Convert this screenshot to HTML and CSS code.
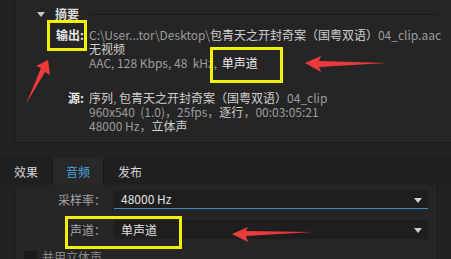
FILE: index.html
```html
<!DOCTYPE html>
<html lang="zh-CN">
<head>
  <meta charset="UTF-8">
  <title>导出设置 - 摘要</title>
  <link rel="stylesheet" href="styles.css">
</head>
<body>
  <section class="summary">
    <div class="summary-head">
      <span class="caret"></span>
      <span class="summary-title">摘要</span>
      <span class="rule"></span>
    </div>
    <dl class="info">
      <dt>输出:</dt>
      <dd>
        <div>C:\User...tor\Desktop\<span class="cjk">包青天之开封奇案（国粤双语）</span>04_clip.aac</div>
        <div class="cjk">无视频</div>
        <div>AAC, 128 Kbps, 48&nbsp; kHz, <span class="hi">单声道</span></div>
      </dd>
      <dt>源:</dt>
      <dd>
        <div><span class="cjk">序列</span>, <span class="cjk">包青天之开封奇案（国粤双语）</span>04_clip</div>
        <div>960x540&nbsp; (1.0)，25fps，<span class="cjk">逐行</span>，00:03:05:21</div>
        <div>48000 Hz，<span class="cjk">立体声</span></div>
      </dd>
    </dl>
  </section>

  <nav class="tabs">
    <button class="tab">效果</button>
    <button class="tab active">音频</button>
    <button class="tab">发布</button>
  </nav>

  <section class="panel">
    <div class="field">
      <label>采样率：</label>
      <div class="select focused">48000 Hz<span class="drop"></span></div>
    </div>
    <div class="field">
      <label>声道：</label>
      <div class="select">单声道<span class="drop"></span></div>
    </div>
    <div class="check"><span class="box"></span>并用立体声</div>
  </section>

  <!-- annotations drawn over the screenshot -->
  <div class="mark mark-output"></div>
  <div class="mark mark-mono"></div>
  <div class="mark mark-channel"></div>
  <svg class="arrows" width="451" height="259" viewBox="0 0 451 259">
    <polygon points="305,63 321,56 319,61 386,63 319,67 321,72" />
    <polygon points="48,60 50,75 45,72 26,104 41,68 36,66" />
    <polygon points="232,234 248,227 246,231 313,232 246,236 248,242" />
  </svg>
</body>
</html>
```

FILE: styles.css
```css
* { box-sizing: border-box; margin: 0; padding: 0; }
html, body {
  width: 451px;
  height: 259px;
  overflow: hidden;
}
body {
  position: relative;
  background-color: #222222;
  color: #b4b4b4;
  font-family: "Noto Sans CJK SC", "Noto Sans", sans-serif;
  font-size: 12px;
}

/* summary block */
.summary {
  margin-left: 14px;
  height: 143px;
  background-color: #252525;
  border-left: 1px solid #191919;
  border-bottom: 1px solid #191919;
}
.summary-head {
  display: flex;
  align-items: center;
  height: 28px;
  padding-left: 22px;
}
.caret {
  width: 0;
  height: 0;
  border-left: 4px solid transparent;
  border-right: 4px solid transparent;
  border-top: 5px solid #c8c8c8;
}
.summary-title {
  margin-left: 10px;
  color: #dcdcdc;
  font-weight: bold;
  line-height: 14px;
}
.rule {
  flex: 1;
  height: 1px;
  margin: 0 12px 0 10px;
  background-color: #1a1a1a;
}
.info {
  display: grid;
  grid-template-columns: 72px 1fr;
  column-gap: 2px;
  row-gap: 21px;
  line-height: 14px;
}
.info dt {
  padding-right: 3px;
  text-align: right;
  color: #e8e8e8;
  font-weight: bold;
}
.info dd { color: #9c9c9c; white-space: nowrap; }
.cjk { color: #cfcfcf; }
.hi { color: #ececec; margin-left: 2px; }

/* tabs */
.tabs {
  display: flex;
  margin-top: 15px;
  height: 27px;
  background-color: #1f1f1f;
}
.tab {
  width: 52px;
  border: none;
  background-color: #1f1f1f;
  color: #d4d4d4;
  font-family: inherit;
  font-size: 12px;
}
.tab.active {
  background-color: #282828;
  color: #4aa3de;
  border-left: 1px solid #191919;
  border-right: 1px solid #191919;
}

/* audio panel */
.panel {
  margin-left: 14px;
  width: 424px;
  height: 80px;
  padding-top: 5px;
  background-color: #252525;
  border-left: 1px solid #191919;
  border-right: 1px solid #191919;
}
.field {
  display: grid;
  grid-template-columns: 91px 314px;
  column-gap: 8px;
  align-items: center;
  margin-bottom: 11px;
}
.field label {
  text-align: right;
  color: #a6a6a6;
}
.select {
  position: relative;
  height: 19px;
  line-height: 19px;
  padding-left: 7px;
  background-color: #1e1e1e;
  color: #e2e2e2;
}
.select.focused { border-bottom: 1px solid #3b8fc6; line-height: 18px; }
.drop {
  position: absolute;
  right: 6px;
  top: 8px;
  width: 0;
  height: 0;
  border-left: 4px solid transparent;
  border-right: 4px solid transparent;
  border-top: 5px solid #cfcfcf;
}
.check {
  display: flex;
  align-items: flex-start;
  gap: 5px;
  padding-left: 9px;
  color: #8a8a8a;
  line-height: 14px;
}
.box {
  width: 13px;
  height: 13px;
  margin-top: 1px;
  background-color: #1a1a1a;
}

/* red/yellow annotations */
.mark {
  position: absolute;
  border: 3px solid #f2f200;
}
.mark-output { left: 47px; top: 20px; width: 40px; height: 31px; }
.mark-mono { left: 210px; top: 47px; width: 73px; height: 36px; }
.mark-channel { left: 65px; top: 216px; width: 117px; height: 33px; }
.arrows {
  position: absolute;
  left: 0;
  top: 0;
}
.arrows polygon { fill: #ec3a3b; }
```
